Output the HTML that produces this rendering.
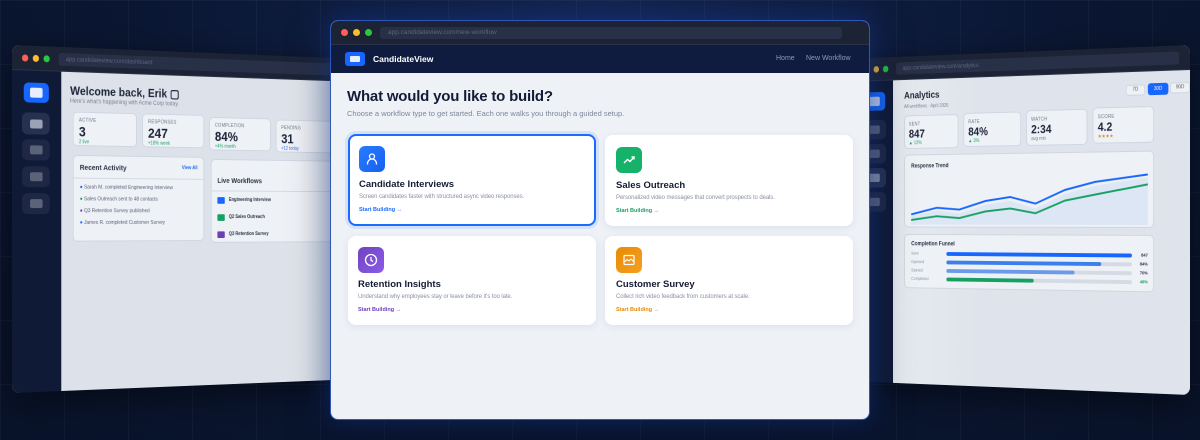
<!DOCTYPE html>
<html><head><meta charset="utf-8"><style>
*{box-sizing:border-box;margin:0;padding:0}
body{width:1200px;height:440px;overflow:hidden;font-family:"Liberation Sans",sans-serif;background:#0a1632;position:relative}
.bg{position:absolute;inset:0;background:radial-gradient(ellipse at 50% 0%,#13244d 0%,#0a1632 55%,#081229 100%)}
.grid{position:absolute;inset:0;background-image:linear-gradient(rgba(255,255,255,.035) 1px,transparent 1px),linear-gradient(90deg,rgba(255,255,255,.035) 1px,transparent 1px);background-size:64px 64px}
.win{position:absolute;border-radius:8px;overflow:hidden;background:#dfe4ec;box-shadow:0 10px 40px rgba(0,0,0,.5)}
.tb{height:25px;background:#1c2335;position:relative;border-bottom:1px solid #2a3248}
.dot{position:absolute;top:9px;width:7px;height:7px;border-radius:50%}
.url{position:absolute;top:6px;height:13px;border-radius:3px;background:#283047;color:#5d6680;font-size:6.5px;line-height:13px;padding-left:8px}
.side{position:absolute;left:0;top:25px;bottom:0;background:#0f1a36}
.sb{position:absolute;border-radius:6px;background:#1e2844}
.sb i{position:absolute;left:50%;top:50%;width:14px;height:9px;margin:-4.5px 0 0 -7px;border-radius:2px;background:#5b6378}
.card{position:absolute;background:#eef1f5;border:1px solid #cfd6e0;border-radius:5px}
.lab{font-size:5px;color:#6b7385;letter-spacing:.3px}
.num{font-size:14px;font-weight:bold;color:#1a2238}
.small{font-size:5px}
#main{left:330px;top:20px;width:540px;height:400px;background:#eef2f7;border:1px solid #2f57b8;box-shadow:0 0 30px rgba(40,100,255,.35),0 10px 40px rgba(0,0,0,.5)}
.nav{height:28px;background:#0f1c3f;position:relative}
.mc{position:absolute;background:#fff;border-radius:8px;box-shadow:0 2px 8px rgba(20,40,90,.08)}
.ic{position:absolute;left:11px;top:12px;width:26px;height:26px;border-radius:6px}
.mc h3{position:absolute;left:11px;top:45px;font-size:9.5px;color:#141c33}
.mc p{position:absolute;left:11px;top:60px;font-size:6px;color:#8a92a3;letter-spacing:-.1px}
.mc a{position:absolute;left:11px;top:73px;font-size:5.5px;font-weight:bold}
</style></head><body>
<div class="bg"></div><div class="grid"></div>

<!-- LEFT WINDOW -->
<div class="win" style="left:12px;top:45px;width:420px;height:348px;transform-origin:0 50%;transform:perspective(2000px) rotateY(25deg)">
 <div class="tb"><div class="dot" style="left:11px;background:#ff5f57"></div><div class="dot" style="left:23px;background:#febc2e"></div><div class="dot" style="left:35px;background:#28c840"></div><div class="url" style="left:52px;right:10px">app.candidateview.com/dashboard</div></div>
 <div class="side" style="width:55px">
  <div style="position:absolute;left:13px;top:12px;width:28px;height:20px;border-radius:5px;background:#1766ff"><i style="position:absolute;left:7px;top:5px;width:14px;height:10px;border-radius:2px;background:#e6eeff"></i></div>
  <div class="sb" style="left:11px;top:42px;width:31px;height:22px;background:#263150"><i style="background:#9aa2b5"></i></div>
  <div class="sb" style="left:11px;top:69px;width:31px;height:21px"><i></i></div>
  <div class="sb" style="left:11px;top:96px;width:31px;height:21px"><i></i></div>
  <div class="sb" style="left:11px;top:123px;width:31px;height:21px"><i></i></div>
 </div>
 <div style="position:absolute;left:55px;top:25px;right:0;bottom:0;background:linear-gradient(90deg,#dde2ea 0%,#dde2ea 70%,#e6e9ef 100%)">
  <div style="position:absolute;left:10px;top:12px;font-size:12px;font-weight:bold;color:#1c2438">Welcome back, Erik ▢</div>
  <div style="position:absolute;left:10px;top:27px;font-size:6px;color:#7b8394">Here's what's happening with Acme Corp today.</div>
  <div class="card" style="left:13px;top:40px;width:74px;height:35px"><div class="lab" style="margin:5px 0 0 6px">ACTIVE</div><div class="num" style="margin-left:6px">3</div><div class="small" style="color:#1aa36a;margin-left:6px">2 live</div></div>
  <div class="card" style="left:93px;top:40px;width:74px;height:35px"><div class="lab" style="margin:5px 0 0 6px">RESPONSES</div><div class="num" style="margin-left:6px">247</div><div class="small" style="color:#1aa36a;margin-left:6px">+18% week</div></div>
  <div class="card" style="left:173px;top:42px;width:76px;height:35px"><div class="lab" style="margin:5px 0 0 6px">COMPLETION</div><div class="num" style="margin-left:6px">84%</div><div class="small" style="color:#1aa36a;margin-left:6px">+4% month</div></div>
  <div class="card" style="left:255px;top:43px;width:80px;height:35px"><div class="lab" style="margin:5px 0 0 6px">PENDING</div><div class="num" style="margin-left:6px">31</div><div class="small" style="color:#3a6fe0;margin-left:6px">+12 today</div></div>
  <div class="card" style="left:13px;top:84px;width:154px;height:88px">
   <div style="font-size:7.5px;font-weight:bold;color:#2a3145;margin:7px 0 0 7px">Recent Activity</div>
   <div style="position:absolute;right:7px;top:8px;font-size:5px;font-weight:bold;color:#2566e8">View All</div>
   <div style="border-top:1px solid #d3d9e2;margin-top:6px"></div>
   <div style="font-size:5.5px;color:#59617a;line-height:12px;margin:3px 0 0 7px">
    <div><span style="color:#1766ff">●</span> Sarah M. completed Engineering Interview</div>
    <div><span style="color:#17a064">●</span> Sales Outreach sent to 48 contacts</div>
    <div><span style="color:#6b3fb8">●</span> Q3 Retention Survey published</div>
    <div><span style="color:#1766ff">●</span> James R. completed Customer Survey</div>
   </div>
  </div>
  <div class="card" style="left:175px;top:86px;width:200px;height:88px">
   <div style="font-size:7.5px;font-weight:bold;color:#2a3145;margin:17px 0 0 7px">Live Workflows</div>
   <div style="border-top:1px solid #d3d9e2;margin-top:6px"></div>
   <div style="font-size:5px;color:#2a3145;font-weight:bold;margin:6px 0 0 7px;line-height:6px">
    <div style="height:18px"><span style="display:inline-block;width:9px;height:7px;background:#1766ff;border-radius:1px;vertical-align:top;margin-right:5px"></span>Engineering Interview</div>
    <div style="height:18px"><span style="display:inline-block;width:9px;height:7px;background:#17a064;border-radius:1px;vertical-align:top;margin-right:5px"></span>Q2 Sales Outreach</div>
    <div style="height:18px"><span style="display:inline-block;width:9px;height:7px;background:#6b3fb8;border-radius:1px;vertical-align:top;margin-right:5px"></span>Q3 Retention Survey</div>
   </div>
  </div>
 </div>
</div>

<!-- RIGHT WINDOW -->
<div class="win" style="left:790px;top:45px;width:400px;height:350px;transform-origin:100% 50%;transform:perspective(2000px) rotateY(-25deg)">
 <div class="tb"><div class="dot" style="left:11px;background:#ff5f57"></div><div class="dot" style="left:23px;background:#febc2e"></div><div class="dot" style="left:35px;background:#28c840"></div><div class="url" style="left:52px;right:12px">app.candidateview.com/analytics</div></div>
 <div class="side" style="width:48px">
  <div style="position:absolute;left:10px;top:12px;width:28px;height:20px;border-radius:5px;background:#1766ff"><i style="position:absolute;left:7px;top:5px;width:14px;height:10px;border-radius:2px;background:#c9d8f5"></i></div>
  <div class="sb" style="left:9px;top:42px;width:30px;height:21px"><i></i></div>
  <div class="sb" style="left:9px;top:68px;width:30px;height:21px"><i></i></div>
  <div class="sb" style="left:9px;top:94px;width:30px;height:21px;background:#273253"><i style="background:#8a93a8"></i></div>
  <div class="sb" style="left:9px;top:120px;width:30px;height:21px"><i></i></div>
 </div>
 <div style="position:absolute;left:48px;top:25px;right:0;bottom:0;background:linear-gradient(90deg,#e6e9ef,#dfe4ec 30%)">
  <div style="position:absolute;left:14px;top:12px;font-size:10px;font-weight:bold;color:#1c2438">Analytics</div>
  <div style="position:absolute;left:14px;top:26px;font-size:5px;color:#7b8394">All workflows · April 2026</div>
  <div style="position:absolute;right:50px;top:13px;width:22px;height:11px;border:1px solid #cfd6e0;border-radius:3px;background:#eef1f5;font-size:5px;text-align:center;line-height:9px;color:#555">7D</div>
  <div style="position:absolute;right:24px;top:12px;width:23px;height:12px;border-radius:3px;background:#1766ff;font-size:5px;text-align:center;line-height:12px;color:#fff">30D</div>
  <div style="position:absolute;right:0px;top:12px;width:22px;height:11px;border:1px solid #cfd6e0;border-radius:3px;background:#eef1f5;font-size:5px;text-align:center;line-height:9px;color:#555">90D</div>
  <div class="card" style="left:14px;top:38px;width:68px;height:36px"><div class="lab" style="margin:6px 0 0 5px">SENT</div><div class="num" style="margin-left:5px;font-size:12px">847</div><div class="small" style="color:#1aa36a;margin-left:5px">▲ 12%</div></div>
  <div class="card" style="left:88px;top:37px;width:70px;height:36px"><div class="lab" style="margin:6px 0 0 5px">RATE</div><div class="num" style="margin-left:5px;font-size:12px">84%</div><div class="small" style="color:#1aa36a;margin-left:5px">▲ 3%</div></div>
  <div class="card" style="left:164px;top:36px;width:72px;height:37px"><div class="lab" style="margin:6px 0 0 5px">WATCH</div><div class="num" style="margin-left:5px;font-size:12px">2:34</div><div class="small" style="color:#7b8394;margin-left:5px">avg min</div></div>
  <div class="card" style="left:242px;top:35px;width:70px;height:37px"><div class="lab" style="margin:6px 0 0 5px">SCORE</div><div class="num" style="margin-left:5px;font-size:12px">4.2</div><div class="small" style="color:#e08a10;margin-left:5px">★★★★</div></div>
  <div class="card" style="left:14px;top:80px;width:298px;height:78px">
   <div style="font-size:6px;font-weight:bold;color:#2a3145;margin:9px 0 0 8px">Response Trend</div>
   <svg width="298" height="60" style="position:absolute;left:0;top:16px" viewBox="0 0 298 60">
    <path d="M8 49 L40 43 L68 46 L100 37 L130 33 L160 41 L195 26 L230 18 L290 10 L290 58 L8 58Z" fill="#1766ff" opacity=".08"/>
    <polyline points="8,47 40,40 68,42 100,33 130,29 160,36 195,22 230,14 290,7" fill="none" stroke="#1766ff" stroke-width="2"/>
    <polyline points="8,53 40,49 68,51 100,44 130,41 160,46 195,33 230,27 290,17" fill="none" stroke="#17a064" stroke-width="2"/>
   </svg>
  </div>
  <div class="card" style="left:14px;top:165px;width:298px;height:58px;font-size:4.5px;color:#8a92a3">
   <div style="font-size:6px;font-weight:bold;color:#2a3145;margin:7px 0 4px 8px">Completion Funnel</div>
   <div style="position:relative;height:9px"><span style="position:absolute;left:8px">Sent</span><div style="position:absolute;left:52px;width:220px;top:1px;height:4px;background:#d5dbe4;border-radius:2px"><div style="width:100%;height:100%;background:#1766ff;border-radius:2px"></div></div><b style="position:absolute;right:6px;color:#2a3145">847</b></div>
   <div style="position:relative;height:9px"><span style="position:absolute;left:8px">Opened</span><div style="position:absolute;left:52px;width:220px;top:1px;height:4px;background:#d5dbe4;border-radius:2px"><div style="width:84%;height:100%;background:#3b7fee;border-radius:2px"></div></div><b style="position:absolute;right:6px;color:#2a3145">84%</b></div>
   <div style="position:relative;height:9px"><span style="position:absolute;left:8px">Started</span><div style="position:absolute;left:52px;width:220px;top:1px;height:4px;background:#d5dbe4;border-radius:2px"><div style="width:70%;height:100%;background:#6a9ae8;border-radius:2px"></div></div><b style="position:absolute;right:6px;color:#2a3145">70%</b></div>
   <div style="position:relative;height:9px"><span style="position:absolute;left:8px">Completed</span><div style="position:absolute;left:52px;width:220px;top:1px;height:4px;background:#d5dbe4;border-radius:2px"><div style="width:48%;height:100%;background:#17a064;border-radius:2px"></div></div><b style="position:absolute;right:6px;color:#17a064">49%</b></div>
  </div>
 </div>
</div>

<!-- MAIN WINDOW -->
<div class="win" id="main">
 <div class="tb" style="height:24px"><div class="dot" style="left:10px;top:8px;background:#ff5f57"></div><div class="dot" style="left:22px;top:8px;background:#febc2e"></div><div class="dot" style="left:34px;top:8px;background:#28c840"></div><div class="url" style="left:49px;right:27px;top:6px;height:12px;line-height:12px">app.candidateview.com/new-workflow</div></div>
 <div class="nav">
  <div style="position:absolute;left:14px;top:7px;width:20px;height:14px;border-radius:3px;background:#1766ff"><i style="position:absolute;left:5px;top:4px;width:10px;height:6px;border-radius:1px;background:#e6eeff"></i></div>
  <div style="position:absolute;left:42px;top:9px;font-size:8.5px;font-weight:bold;color:#fff">CandidateView</div>
  <div style="position:absolute;left:445px;top:10px;font-size:7px;color:#8f9ab3">Home</div>
  <div style="position:absolute;left:475px;top:10px;font-size:7px;color:#8f9ab3">New Workflow</div>
 </div>
 <div style="position:absolute;left:16px;top:67px;font-size:15px;font-weight:bold;color:#131c36;letter-spacing:-.2px">What would you like to build?</div>
 <div style="position:absolute;left:16px;top:88px;font-size:7.5px;color:#7d879b">Choose a workflow type to get started. Each one walks you through a guided setup.</div>

 <div class="mc" style="left:17px;top:113px;width:248px;height:92px;border:2px solid #1a6cff;box-shadow:0 0 0 3px rgba(26,108,255,.12)">
  <div class="ic" style="left:9px;top:10px;background:linear-gradient(135deg,#2a7bff,#1560f0)"><svg width="26" height="26" viewBox="0 0 26 26"><circle cx="13" cy="10.5" r="2.5" fill="none" stroke="#fff" stroke-width="1.3"/><path d="M8.5 18.5v-1a4.5 4.5 0 0 1 9 0v1" fill="none" stroke="#fff" stroke-width="1.3"/></svg></div>
  <h3 style="left:9px;top:43px">Candidate Interviews</h3>
  <p style="left:9px;top:58px">Screen candidates faster with structured async video responses.</p>
  <a style="left:9px;top:71px;color:#1a6cff">Start Building →</a>
 </div>
 <div class="mc" style="left:274px;top:114px;width:248px;height:91px">
  <div class="ic" style="background:#17b26a"><svg width="26" height="26" viewBox="0 0 26 26"><path d="M8 16l3.5-3.5 2.5 2 4-4.5M15.5 10h2.5v2.5" fill="none" stroke="#fff" stroke-width="1.4"/></svg></div>
  <h3>Sales Outreach</h3>
  <p>Personalized video messages that convert prospects to deals.</p>
  <a style="color:#17a064">Start Building →</a>
 </div>
 <div class="mc" style="left:17px;top:215px;width:248px;height:89px">
  <div class="ic" style="left:10px;top:11px;background:linear-gradient(135deg,#7043c0,#8a5ce8)"><svg width="26" height="26" viewBox="0 0 26 26"><circle cx="13" cy="13" r="5.5" fill="none" stroke="#fff" stroke-width="1.3"/><path d="M13 10v3.3l2 1.3" fill="none" stroke="#fff" stroke-width="1.3"/></svg></div>
  <h3 style="left:10px;top:43px">Retention Insights</h3>
  <p style="left:10px;top:58px">Understand why employees stay or leave before it's too late.</p>
  <a style="left:10px;top:71px;color:#6b3fb8">Start Building →</a>
 </div>
 <div class="mc" style="left:274px;top:215px;width:248px;height:89px">
  <div class="ic" style="top:11px;background:linear-gradient(135deg,#e88a05,#f5a020)"><svg width="26" height="26" viewBox="0 0 26 26"><rect x="8" y="8.5" width="10" height="9" rx="1" fill="none" stroke="#fff" stroke-width="1.2"/><path d="M8.5 15l2.5-2.5 2 1.5 2-2 2.5 2.5" fill="none" stroke="#fff" stroke-width="1.1"/></svg></div>
  <h3 style="top:43px">Customer Survey</h3>
  <p style="top:58px">Collect rich video feedback from customers at scale.</p>
  <a style="top:71px;color:#e88a05">Start Building →</a>
 </div>
</div>
</body></html>
